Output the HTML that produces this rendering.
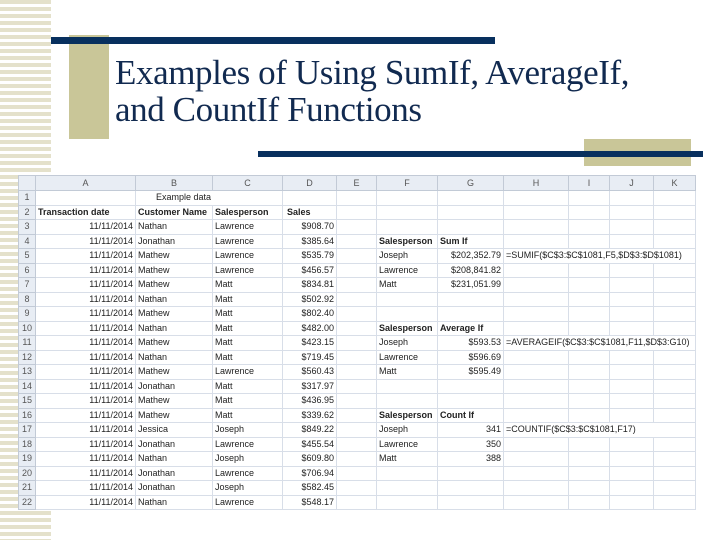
<!DOCTYPE html>
<html><head><meta charset="utf-8"><style>
body{margin:0;width:720px;height:540px;background:#fff;position:relative;overflow:hidden;font-family:"Liberation Sans",sans-serif}
.stripes{position:absolute;left:0;top:0;width:51px;height:540px;background:repeating-linear-gradient(180deg,#e4e1cb 0 4px,#fff 4px 7px)}
.tan1{position:absolute;left:69px;top:35px;width:40px;height:104px;background:#c9c698}
.tan2{position:absolute;left:584px;top:139px;width:107px;height:27px;background:#c9c698}
.bar1{position:absolute;left:51px;top:37px;width:444px;height:7px;background:#08305e}
.bar2{position:absolute;left:258px;top:151px;width:445px;height:6px;background:#08305e}
h1{position:absolute;left:115px;top:54px;margin:0;font:35px/37px "Liberation Serif",serif;color:#112a50;font-weight:normal;letter-spacing:-0.4px}
table{position:absolute;left:18px;top:175px;border-collapse:collapse;table-layout:fixed;font-size:9px;color:#222;background:#fff}
td{border:1px solid #d8dee8;height:13.5px;padding:0 2px;white-space:nowrap;overflow:visible;line-height:13px}
tr.h td{background:#e8edf4;color:#555;text-align:center;border-color:#c2cad6;height:14px}
td.rh{background:#e8edf4;color:#555;text-align:center;border-color:#c2cad6;padding:0}
.r{text-align:right}.b{font-weight:bold}
</style></head><body>
<div class="stripes"></div>
<div class="tan1"></div><div class="tan2"></div>
<div class="bar1"></div><div class="bar2"></div>
<h1>Examples of Using SumIf, AverageIf,<br>and CountIf Functions</h1>
<table>
<colgroup><col style="width:17px"><col style="width:100px"><col style="width:77px"><col style="width:70px"><col style="width:54px"><col style="width:40px"><col style="width:61px"><col style="width:66px"><col style="width:65px"><col style="width:41px"><col style="width:44px"><col style="width:42px"></colgroup>
<tr class="h"><td></td><td>A</td><td>B</td><td>C</td><td>D</td><td>E</td><td>F</td><td>G</td><td>H</td><td>I</td><td>J</td><td>K</td></tr>
<tr><td class="rh">1</td><td></td><td colspan="2" style="padding-left:20px">Example data</td><td></td><td></td><td></td><td></td><td></td><td></td><td></td><td></td></tr>
<tr><td class="rh">2</td><td class="b">Transaction date</td><td class="b">Customer Name</td><td class="b">Salesperson</td><td class="b" style="padding-left:4px">Sales</td><td></td><td></td><td></td><td></td><td></td><td></td><td></td></tr>
<tr><td class="rh">3</td><td class="r">11/11/2014</td><td>Nathan</td><td>Lawrence</td><td class="r">$908.70</td><td></td><td></td><td></td><td></td><td></td><td></td><td></td></tr>
<tr><td class="rh">4</td><td class="r">11/11/2014</td><td>Jonathan</td><td>Lawrence</td><td class="r">$385.64</td><td></td><td class="b">Salesperson</td><td class="b">Sum If</td><td></td><td></td><td></td><td></td></tr>
<tr><td class="rh">5</td><td class="r">11/11/2014</td><td>Mathew</td><td>Lawrence</td><td class="r">$535.79</td><td></td><td>Joseph</td><td class="r">$202,352.79</td><td colspan="4">=SUMIF($C$3:$C$1081,F5,$D$3:$D$1081)</td></tr>
<tr><td class="rh">6</td><td class="r">11/11/2014</td><td>Mathew</td><td>Lawrence</td><td class="r">$456.57</td><td></td><td>Lawrence</td><td class="r">$208,841.82</td><td></td><td></td><td></td><td></td></tr>
<tr><td class="rh">7</td><td class="r">11/11/2014</td><td>Mathew</td><td>Matt</td><td class="r">$834.81</td><td></td><td>Matt</td><td class="r">$231,051.99</td><td></td><td></td><td></td><td></td></tr>
<tr><td class="rh">8</td><td class="r">11/11/2014</td><td>Nathan</td><td>Matt</td><td class="r">$502.92</td><td></td><td></td><td></td><td></td><td></td><td></td><td></td></tr>
<tr><td class="rh">9</td><td class="r">11/11/2014</td><td>Mathew</td><td>Matt</td><td class="r">$802.40</td><td></td><td></td><td></td><td></td><td></td><td></td><td></td></tr>
<tr><td class="rh">10</td><td class="r">11/11/2014</td><td>Nathan</td><td>Matt</td><td class="r">$482.00</td><td></td><td class="b">Salesperson</td><td class="b">Average If</td><td></td><td></td><td></td><td></td></tr>
<tr><td class="rh">11</td><td class="r">11/11/2014</td><td>Mathew</td><td>Matt</td><td class="r">$423.15</td><td></td><td>Joseph</td><td class="r">$593.53</td><td colspan="4">=AVERAGEIF($C$3:$C$1081,F11,$D$3:G10)</td></tr>
<tr><td class="rh">12</td><td class="r">11/11/2014</td><td>Nathan</td><td>Matt</td><td class="r">$719.45</td><td></td><td>Lawrence</td><td class="r">$596.69</td><td></td><td></td><td></td><td></td></tr>
<tr><td class="rh">13</td><td class="r">11/11/2014</td><td>Mathew</td><td>Lawrence</td><td class="r">$560.43</td><td></td><td>Matt</td><td class="r">$595.49</td><td></td><td></td><td></td><td></td></tr>
<tr><td class="rh">14</td><td class="r">11/11/2014</td><td>Jonathan</td><td>Matt</td><td class="r">$317.97</td><td></td><td></td><td></td><td></td><td></td><td></td><td></td></tr>
<tr><td class="rh">15</td><td class="r">11/11/2014</td><td>Mathew</td><td>Matt</td><td class="r">$436.95</td><td></td><td></td><td></td><td></td><td></td><td></td><td></td></tr>
<tr><td class="rh">16</td><td class="r">11/11/2014</td><td>Mathew</td><td>Matt</td><td class="r">$339.62</td><td></td><td class="b">Salesperson</td><td class="b">Count If</td><td></td><td></td><td></td><td></td></tr>
<tr><td class="rh">17</td><td class="r">11/11/2014</td><td>Jessica</td><td>Joseph</td><td class="r">$849.22</td><td></td><td>Joseph</td><td class="r">341</td><td colspan="4">=COUNTIF($C$3:$C$1081,F17)</td></tr>
<tr><td class="rh">18</td><td class="r">11/11/2014</td><td>Jonathan</td><td>Lawrence</td><td class="r">$455.54</td><td></td><td>Lawrence</td><td class="r">350</td><td></td><td></td><td></td><td></td></tr>
<tr><td class="rh">19</td><td class="r">11/11/2014</td><td>Nathan</td><td>Joseph</td><td class="r">$609.80</td><td></td><td>Matt</td><td class="r">388</td><td></td><td></td><td></td><td></td></tr>
<tr><td class="rh">20</td><td class="r">11/11/2014</td><td>Jonathan</td><td>Lawrence</td><td class="r">$706.94</td><td></td><td></td><td></td><td></td><td></td><td></td><td></td></tr>
<tr><td class="rh">21</td><td class="r">11/11/2014</td><td>Jonathan</td><td>Joseph</td><td class="r">$582.45</td><td></td><td></td><td></td><td></td><td></td><td></td><td></td></tr>
<tr><td class="rh">22</td><td class="r">11/11/2014</td><td>Nathan</td><td>Lawrence</td><td class="r">$548.17</td><td></td><td></td><td></td><td></td><td></td><td></td><td></td></tr>
</table>
</body></html>
